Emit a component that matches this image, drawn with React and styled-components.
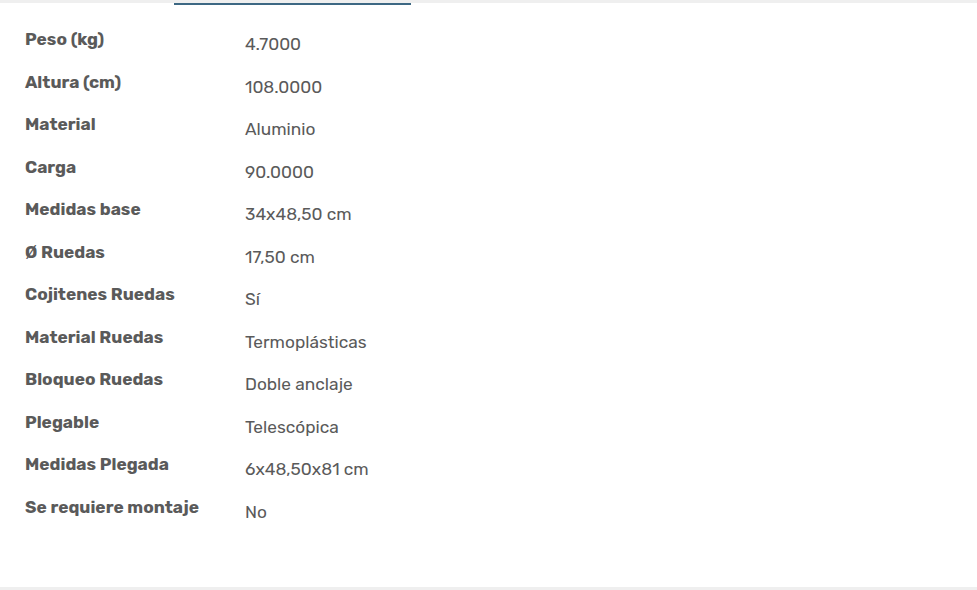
import React from "react";
import styled, { createGlobalStyle } from "styled-components";

const Global = createGlobalStyle`
  html, body { margin: 0; padding: 0; background: #fff; }
  body { font-family: "Rubik", "Noto Sans", "Open Sans", sans-serif; }
`;

const Page = styled.div`
  width: 977px;
  height: 590px;
  display: flex;
  flex-direction: column;
  overflow: hidden;
`;

const TopBand = styled.div`
  height: 3px;
  background: #efefef;
  flex: none;
`;

const TabLine = styled.div`
  margin-left: 174px;
  width: 237px;
  height: 2px;
  background: #3d6883;
  flex: none;
`;

const Body = styled.div`
  flex: 1;
  padding: 23px 0 0 25px;
`;

const Table = styled.div`
  display: grid;
  grid-template-columns: 220px auto;
  grid-auto-rows: 42.5px;
  align-items: start;
`;

const Label = styled.div`
  font-weight: 700;
  font-size: 17.3px;
  color: #5a5a5a;
  line-height: 22px;
`;

const Value = styled.div`
  font-weight: 400;
  font-size: 17.3px;
  color: #5a5a5a;
  line-height: 22px;
  padding-top: 5px;
`;

const BottomBand = styled.div`
  height: 3px;
  background: #efefef;
  flex: none;
`;

const rows = [
  ["Peso (kg)", "4.7000"],
  ["Altura (cm)", "108.0000"],
  ["Material", "Aluminio"],
  ["Carga", "90.0000"],
  ["Medidas base", "34x48,50 cm"],
  ["Ø Ruedas", "17,50 cm"],
  ["Cojitenes Ruedas", "Sí"],
  ["Material Ruedas", "Termoplásticas"],
  ["Bloqueo Ruedas", "Doble anclaje"],
  ["Plegable", "Telescópica"],
  ["Medidas Plegada", "6x48,50x81 cm"],
  ["Se requiere montaje", "No"],
];

export default function App() {
  return (
    <Page>
      <Global />
      <TopBand />
      <TabLine />
      <Body>
        <Table>
          {rows.map(([l, v]) => (
            <React.Fragment key={l}>
              <Label>{l}</Label>
              <Value>{v}</Value>
            </React.Fragment>
          ))}
        </Table>
      </Body>
      <BottomBand />
    </Page>
  );
}
